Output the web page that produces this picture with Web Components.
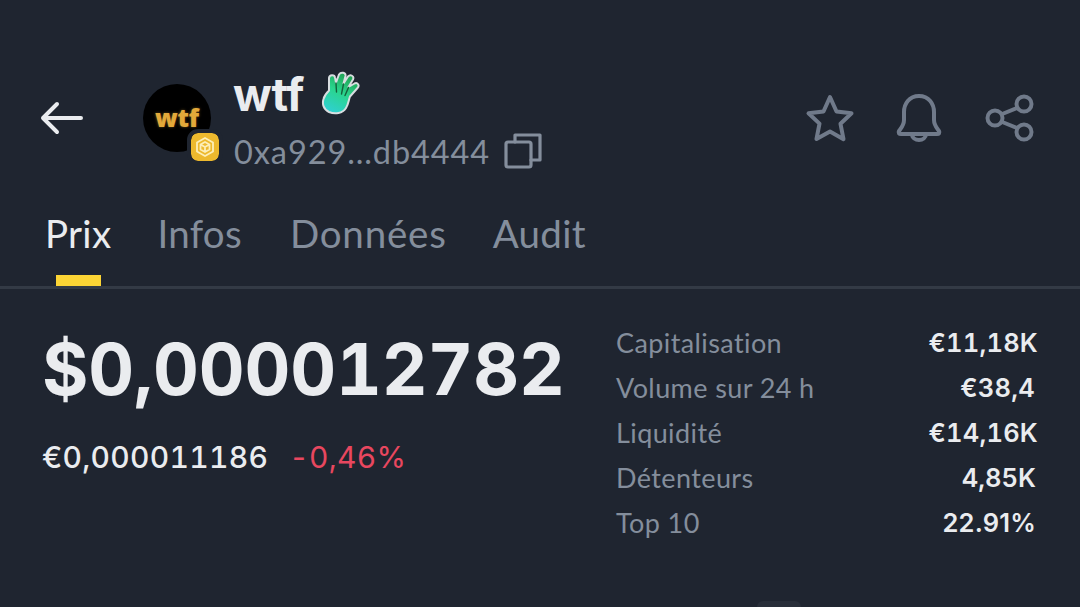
<!DOCTYPE html>
<html>
<head>
<meta charset="utf-8">
<style>
  html, body { margin: 0; height: 100%; }
  body { background: #1f2530; font-family: Lato, "Liberation Sans", sans-serif; overflow: hidden; }
</style>
</head>
<body>
<token-page></token-page>
<script>
class TokenHeader extends HTMLElement {
  constructor() {
    super();
    this.attachShadow({mode: 'open'});
  }
  connectedCallback() {
    this.shadowRoot.innerHTML = `
    <style>
      :host { display: flex; align-items: flex-start; padding: 68px 46px 0 40px; height: 104px; }
      .back { width: 44px; height: 36px; margin-top: 32px; flex: none; }
      .avatar { position: relative; width: 68px; height: 68px; margin: 16px 23px 0 59px; flex: none; border-radius: 50%; background: #000;
        display: flex; align-items: center; justify-content: center; }
      .avatar b { color: #e3a93a; font: 800 25px/1 "Open Sans", sans-serif; letter-spacing: -.2px; margin-top: -1px; text-shadow: 0 0 3px rgba(227,169,58,.45); }
      .chain { position: absolute; right: -12px; bottom: -13px; width: 28px; height: 28px; border-radius: 11px; background: #edb92e;
        border: 4px solid #1f2530; background-clip: padding-box; display: flex; align-items: center; justify-content: center; }
      .info { flex: 1; }
      .name { display: flex; align-items: center; height: 54px; margin-left: -1px; color: #eaecef; font: 700 45.500px/54px Inter, sans-serif; letter-spacing: -.3px; }
      .name svg { margin: -4px 0 0 17px; }
      .addr { display: flex; align-items: center; color: #848e9c; font: 400 32.5px/40px Lato, sans-serif; margin-top: 10px; letter-spacing: .9px; }
      .addr svg { margin-left: 13px; margin-top: -2px; }
      .actions { display: flex; gap: 40px; margin-top: 25px; }
    </style>
    <svg class="back" viewBox="0 0 44 36" fill="none" stroke="#eaecef" stroke-width="4" stroke-linecap="round" stroke-linejoin="round">
      <path d="M41 18H3M17 4L3 18l14 14"/>
    </svg>
    <div class="avatar">
      <b>wtf</b>
      <div class="chain">
        <svg width="22" height="22" viewBox="0 0 22 22" fill="none" stroke="#fdeeb8" stroke-width="1.800" stroke-linejoin="round">
          <path d="M11 2l8 4.500v9L11 20l-8-4.500v-9z"/><path d="M6.500 8.500L11 6l4.500 2.500v5L11 16l-4.500-2.500zM6.500 8.500L11 11l4.500-2.500M11 11v5"/>
        </svg>
      </div>
    </div>
    <div class="info">
      <div class="name">wtf
        <svg width="40" height="44" viewBox="0 0 40 44">
          <defs><linearGradient id="hand" x1="0.75" y1="0" x2="0.3" y2="1"><stop offset="0" stop-color="#1f9a4a"/><stop offset=".5" stop-color="#2ad58e"/><stop offset="1" stop-color="#2fd0d0"/></linearGradient></defs>
          <path d="M2.500 28C3.500 24 6 21.500 8 19.500L8 7C8.500 3.500 13.500 3.500 14 6.500L15 11.500 18 3.500C20 0.500 25 1.500 24.500 5L22.500 12.500 27 5.500C29.500 3 33.500 5 32 8.500L27.500 16 33.500 12.500C36.500 11 39 14.500 36.500 17L29 25.500C27.500 29.500 27.500 33 25 37 21.500 42.500 14 43.500 8 41 2.500 38.500 1 33 2.500 28z" fill="url(#hand)" stroke="#d8dde0" stroke-width="2" stroke-linejoin="round"/>
          <path d="M15 12l.5 9M22.500 13l-2 10M27.500 16.500l-3.500 8" stroke="#14603c" stroke-width="1.400" fill="none" stroke-linecap="round"/>
        </svg>
      </div>
      <div class="addr">0xa929...db4444
        <svg width="40" height="40" viewBox="0 0 40 40" fill="none" stroke="#848e9c" stroke-width="3.200" stroke-linejoin="round" stroke-linecap="round">
          <rect x="3" y="11" width="25" height="25" rx="2"/><path d="M12 11V4h25v25h-9"/>
        </svg>
      </div>
    </div>
    <div class="actions">
      <svg width="50" height="50" viewBox="0 0 50 50" fill="none" stroke="#707a8a" stroke-width="4" stroke-linejoin="round"><path d="M26 4l6.500 14.500 15 1.800-11 10.500 3 15.400L26 38.500 12.500 46l3-15.400L4.500 20.300l15-1.800z"/></svg>
      <svg width="50" height="50" viewBox="0 0 50 50" fill="none" stroke="#707a8a" stroke-width="4" stroke-linejoin="round"><path d="M25 3c-10 0-15 8-15 16v8c0 5-2 7-5 11-1 2 0 3 2 3h36c2 0 3-1 2-3-3-4-5-6-5-11v-8c0-8-5-16-15-16zM18 41c0 8 14 8 14 0"/></svg>
      <svg width="50" height="50" viewBox="0 0 50 50" fill="none" stroke="#707a8a" stroke-width="4"><circle cx="40" cy="11" r="7.500"/><circle cx="11" cy="25" r="7.500"/><circle cx="40" cy="39" r="7.500"/><path d="M17 21.500L34 14.500M17 28.500l17 7"/></svg>
    </div>`;
  }
}

class TabBar extends HTMLElement {
  constructor() {
    super();
    this.attachShadow({mode: 'open'});
  }
  connectedCallback() {
    this.shadowRoot.innerHTML = `
    <style>
      :host { display: flex; gap: 47px; height: 114px; padding: 0 0 0 45px; border-bottom: 3px solid #333a45; font: 400 38.500px/46px Lato, sans-serif; letter-spacing: .3px; color: #848e9c; }
      span { display: block; padding-top: 38px; position: relative; }
      .on { color: #eaecef; margin-right: -1px; }
      .on::after { content: ""; position: absolute; left: 50%; bottom: 0; width: 45px; height: 11px; margin-left: -22px; background: #fcd535; }
      .wide { letter-spacing: .8px; margin: 0 -1px 0 1px; }
    </style>
    <span class="on">Prix</span><span>Infos</span><span class="wide">Données</span><span>Audit</span>`;
  }
}

class StatRow extends HTMLElement {
  constructor() {
    super();
    this.attachShadow({mode: 'open'});
  }
  connectedCallback() {
    this.shadowRoot.innerHTML = `
    <style>
      :host { display: flex; justify-content: space-between; height: 45px; align-items: center; font-size: 27px; }
      .k { color: #848e9c; letter-spacing: .4px; }
      .v { color: #eaecef; font: 600 25.500px Inter, sans-serif; letter-spacing: var(--ls, .2px); font-variant-numeric: var(--nums, tabular-nums); padding-right: var(--pr, 0); }
    </style>
    <span class="k"><slot name="k"></slot></span><span class="v"><slot name="v"></slot></span>`;
  }
}

class TokenPage extends HTMLElement {
  constructor() {
    super();
    this.attachShadow({mode: 'open'});
  }
  connectedCallback() {
    this.shadowRoot.innerHTML = `
    <style>
      :host { display: block; font-family: Lato, sans-serif; }
      main { display: flex; justify-content: space-between; padding: 30px 42px 0 42px; }
      .price { color: #eaecef; font: 700 71px/100px Inter, sans-serif; letter-spacing: -.15px; font-variant-numeric: tabular-nums; }
      .sub { display: flex; gap: 21px; font: 500 30px/40px Inter, sans-serif; letter-spacing: .3px; font-variant-numeric: tabular-nums; margin-top: 18px; color: #eaecef; }
      .sub em { font-style: normal; color: #e8475f; font-weight: 400; }
      .stats { width: 422px; padding-top: 1px; }
      .peek { position: absolute; left: 757px; bottom: 0; width: 44px; height: 6px; border-radius: 10px 10px 0 0; background: #282e39; }
    </style>
    <token-header></token-header>
    <tab-bar></tab-bar>
    <main>
      <div>
        <div class="price">$0,000012782</div>
        <div class="sub"><span>€0,000011186</span><em>-0,46%</em></div>
      </div>
      <div class="stats">
        <stat-row><span slot="k">Capitalisation</span><span slot="v">€11,18K</span></stat-row>
        <stat-row style="--pr:3px"><span slot="k">Volume sur 24 h</span><span slot="v">€38,4</span></stat-row>
        <stat-row><span slot="k">Liquidité</span><span slot="v">€14,16K</span></stat-row>
        <stat-row style="--pr:2px;--ls:0"><span slot="k">Détenteurs</span><span slot="v">4,85K</span></stat-row>
        <stat-row style="--pr:2px;--nums:normal"><span slot="k">Top 10</span><span slot="v">22.91%</span></stat-row>
      </div>
    </main>
    <div class="peek"></div>`;
  }
}

customElements.define('token-header', TokenHeader);
customElements.define('tab-bar', TabBar);
customElements.define('stat-row', StatRow);
customElements.define('token-page', TokenPage);
</script>
</body>
</html>
